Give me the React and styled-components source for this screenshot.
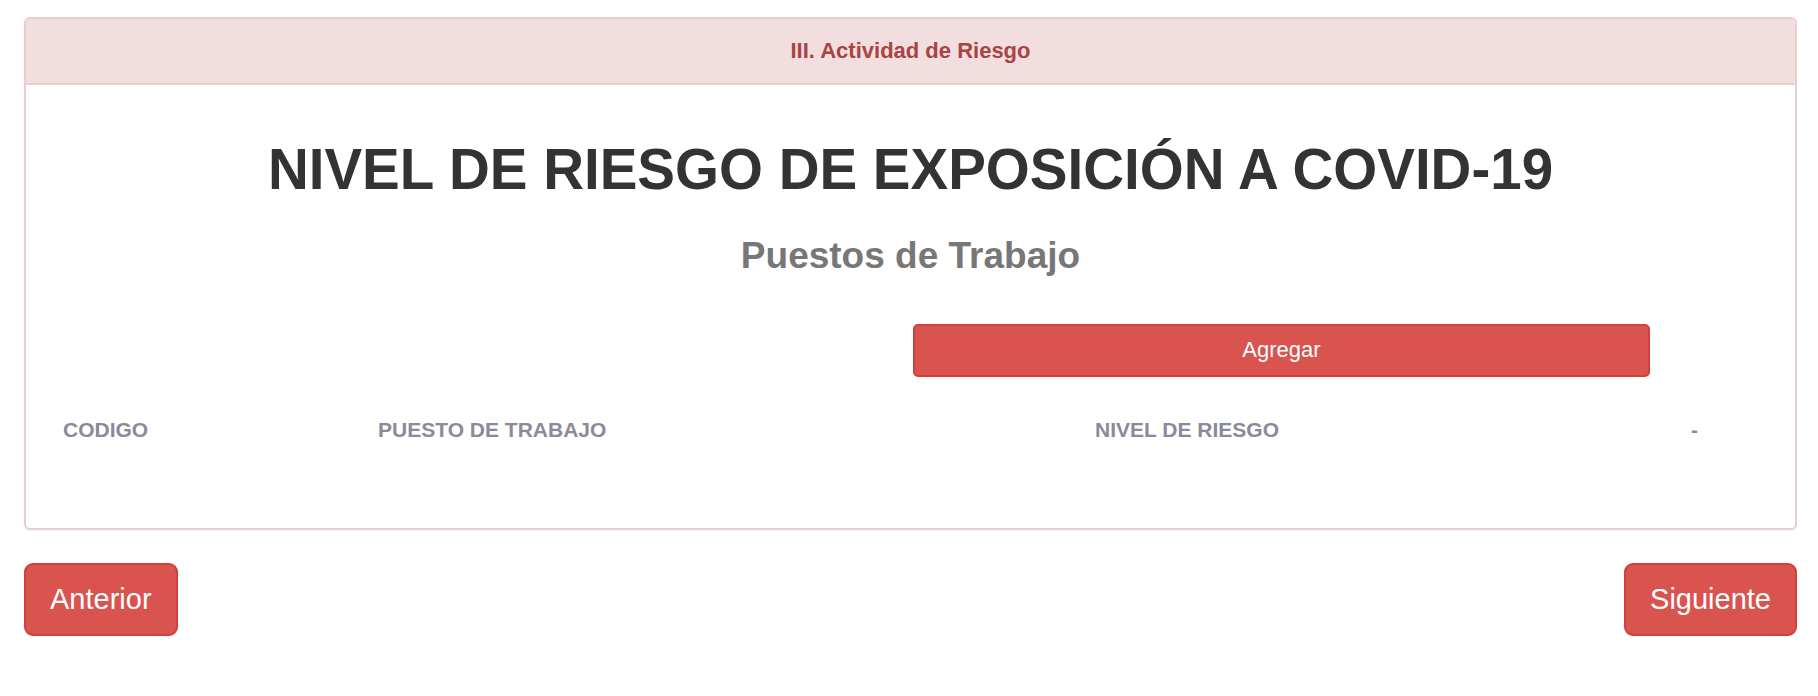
import styled, { createGlobalStyle } from 'styled-components';

const GlobalStyle = createGlobalStyle`
    * {
        box-sizing: border-box;
    }

    body {
        margin: 0;
        background: #fff;
        font-family: "Liberation Sans", Arial, Helvetica, sans-serif;
        color: #333;
    }
`

const Page = styled.div`
    padding: 17px 21px 0 24px;
`

const Panel = styled.section`
    border: 2px solid #ebccd1;
    border-radius: 6px;
    background: #fff;
    box-shadow: 0 1px 2px rgba(0, 0, 0, .05);
    margin-bottom: 33px;
`

const PanelHeading = styled.header`
    background: #f2dede;
    border-bottom: 2px solid #ebccd1;
    border-radius: 4px 4px 0 0;
    height: 66px;
    display: flex;
    align-items: center;
    justify-content: center;
`

const PanelTitle = styled.h4`
    margin: 0;
    color: #a94442;
    font-size: 22px;
    font-weight: 700;
`

const PanelBody = styled.div`
    padding: 54px 24px 73px 24px;
`

const Title = styled.h1`
    margin: 0;
    text-align: center;
    font-size: 56.5px;
    font-weight: 700;
    line-height: 1.1;
    color: #333;
`

const SubTitle = styled.h3`
    margin: 35px 0 0 0;
    text-align: center;
    font-size: 37px;
    font-weight: 700;
    line-height: 1.1;
    color: #777;
`

const ActionRow = styled.div`
    display: grid;
    grid-template-columns: 863px 737px;
    margin-top: 47px;
`

const WideButton = styled.button`
    grid-column: 2;
    height: 53px;
    border: 2px solid #d43f3a;
    border-radius: 5px;
    background: #d9534f;
    color: #fff;
    font-family: inherit;
    font-size: 22px;
`

const Table = styled.div`
    margin-top: 27px;
`

const HeadRow = styled.div`
    display: grid;
    grid-template-columns: 315px 717px 596px 95px;
`

const HeadCell = styled.div`
    padding: 13px 13px;
    color: #8a8a9b;
    font-size: 21px;
    font-weight: 700;
    line-height: 1.2;
`

const Footer = styled.div`
    display: flex;
    justify-content: space-between;
`

const NavButton = styled.button`
    height: 73px;
    padding: 0 24px;
    border: 2px solid #d43f3a;
    border-radius: 9px;
    background: #d9534f;
    color: #fff;
    font-family: inherit;
    font-size: 29px;
`

function App() {
    return (
        <>
            <GlobalStyle />
            <Page>
                <Panel>
                    <PanelHeading>
                        <PanelTitle>III. Actividad de Riesgo</PanelTitle>
                    </PanelHeading>
                    <PanelBody>
                        <Title>NIVEL DE RIESGO DE EXPOSICIÓN A COVID-19</Title>
                        <SubTitle>Puestos de Trabajo</SubTitle>

                        <ActionRow>
                            <WideButton>Agregar</WideButton>
                        </ActionRow>

                        <Table>
                            <HeadRow>
                                <HeadCell>CODIGO</HeadCell>
                                <HeadCell>PUESTO DE TRABAJO</HeadCell>
                                <HeadCell>NIVEL DE RIESGO</HeadCell>
                                <HeadCell>-</HeadCell>
                            </HeadRow>
                        </Table>
                    </PanelBody>
                </Panel>

                <Footer>
                    <NavButton>Anterior</NavButton>
                    <NavButton>Siguiente</NavButton>
                </Footer>
            </Page>
        </>
    );
}

export default App;
